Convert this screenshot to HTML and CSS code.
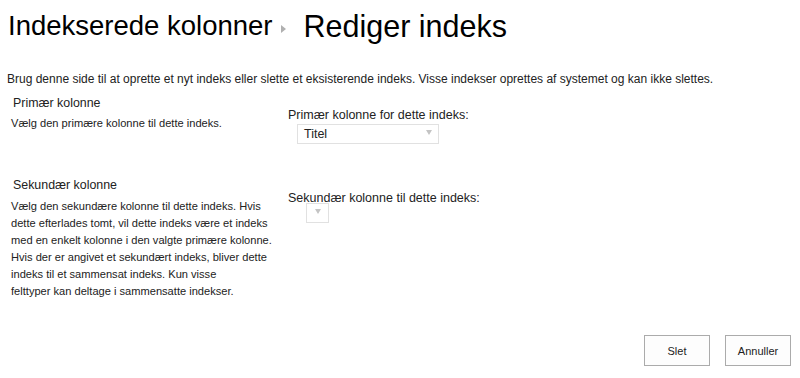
FILE: index.html
```html
<!DOCTYPE html>
<html lang="da">
<head>
    <meta charset="UTF-8">
    <title>Rediger indeks</title>
    <link rel="stylesheet" href="styles.css">
</head>
<body>
    <div class="page">
        <h1 class="title">
            <span class="crumb">Indekserede kolonner</span>
            <span class="crumb-arrow"></span>
            <span class="current">Rediger indeks</span>
        </h1>

        <p class="intro">Brug denne side til at oprette et nyt indeks eller slette et eksisterende indeks. Visse indekser oprettes af systemet og kan ikke slettes.</p>

        <div class="section first">
            <div class="section-info">
                <h3>Primær kolonne</h3>
                <p>Vælg den primære kolonne til dette indeks.</p>
            </div>
            <div class="section-field">
                <label>Primær kolonne for dette indeks:</label>
                <div class="dropdown wide">
                    <span>Titel</span>
                    <span class="caret"></span>
                </div>
            </div>
        </div>

        <div class="section second">
            <div class="section-info">
                <h3>Sekundær kolonne</h3>
                <p>Vælg den sekundære kolonne til dette indeks. Hvis dette efterlades tomt, vil dette indeks være et indeks med en enkelt kolonne i den valgte primære kolonne. Hvis der er angivet et sekundært indeks, bliver dette indeks til et sammensat indeks. Kun visse<br>felttyper kan deltage i sammensatte indekser.</p>
            </div>
            <div class="section-field">
                <label>Sekundær kolonne til dette indeks:</label>
                <div class="dropdown narrow">
                    <span class="caret"></span>
                </div>
            </div>
        </div>

        <div class="buttons">
            <button>Slet</button>
            <button>Annuller</button>
        </div>
    </div>
</body>
</html>
```

FILE: styles.css
```css
body {
    margin: 0;
    font-family: "Liberation Sans", Arial, sans-serif;
    color: #222;
    background: white;
}
.page {
    width: 800px;
}
.title {
    margin: 0;
    padding: 7px 0 0 8px;
    height: 38px;
    font-weight: normal;
    color: #000;
    display: flex;
    align-items: center;
    white-space: nowrap;
}
.crumb {
    font-size: 27.5px;
}
.current {
    font-size: 30.5px;
}
.crumb-arrow {
    width: 0;
    height: 0;
    border-top: 4px solid transparent;
    border-bottom: 4px solid transparent;
    border-left: 5px solid #b0b0b0;
    margin: 6px 18px 0 8px;
}
.intro {
    margin: 27px 0 0 7px;
    font-size: 12px;
    color: #222;
}
.section {
    display: flex;
}
.section-info {
    width: 262px;
    padding-left: 11px;
    padding-right: 15px;
}
.section-info h3 {
    margin: 0 0 0 2px;
    font-weight: normal;
    font-size: 12.4px;
    color: #222;
}
.section-info p {
    margin: 10px 0 0 0;
    font-size: 11.1px;
    line-height: 17px;
    color: #222;
}
.first {
    margin-top: 10px;
}
.first .section-info p {
    margin-top: 5px;
}
.first .section-field {
    padding-top: 12px;
}
.second {
    margin-top: 34px;
}
.second .section-info p {
    margin-top: 6px;
}
.second .section-field {
    padding-top: 13px;
}
.section-field label {
    display: block;
    font-size: 12.5px;
    color: #222;
}
.dropdown {
    box-sizing: border-box;
    height: 20px;
    border: 1px solid #e1e1e1;
    background: white;
    display: flex;
    align-items: center;
    justify-content: space-between;
    font-size: 12.5px;
    color: #222;
    margin-top: 2px;
}
.dropdown.wide {
    width: 142px;
    margin-left: 9px;
    padding: 0 6px;
}
.dropdown.narrow {
    width: 23px;
    margin-left: 18px;
    margin-top: -2px;
    justify-content: center;
}
.caret {
    width: 0;
    height: 0;
    border-left: 3px solid transparent;
    border-right: 3px solid transparent;
    border-top: 5px solid #c4c4c4;
    margin-top: -4px;
}
.buttons {
    display: flex;
    justify-content: flex-end;
    gap: 15px;
    padding-right: 9px;
    margin-top: 35px;
}
.buttons button {
    width: 66px;
    height: 31px;
    border: 1px solid #ababab;
    background: #fdfdfd;
    font-family: "Liberation Sans", Arial, sans-serif;
    font-size: 11px;
    color: #222;
}
```
